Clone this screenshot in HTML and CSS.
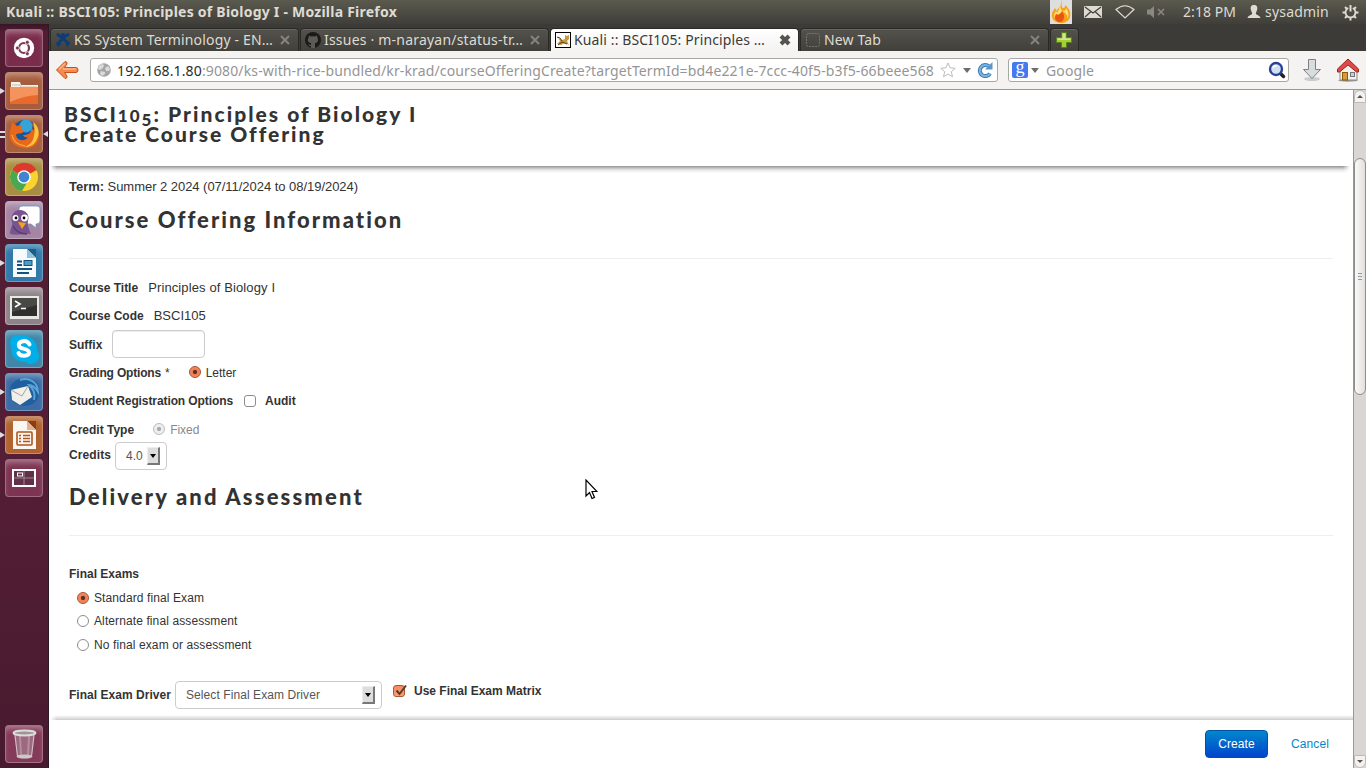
FILE: index.html
```
<!DOCTYPE html>
<html lang="en">
<head>
<meta charset="utf-8">
<title>Kuali :: BSCI105: Principles of Biology I</title>
<link rel="stylesheet" href="styles.css">
</head>
<body>
<header class="panel">
  <span class="panel-title">Kuali :: BSCI105: Principles of Biology I - Mozilla Firefox</span>
  <div class="tray">
    <svg class="tray-flame" width="22" height="24" viewBox="0 0 22 24"><rect width="22" height="24" fill="#dedede"/><path d="M11 0c2 4-1 5 2 8 2 0 2-2 2-3 5 4 6 8 5 12-1 4-5 6-9 6-6 0-10-4-9-9 0-3 2-4 3-6 1 1 1 2 1 3 3-3 6-6 5-11z" fill="#f9a11b"/><path d="M10 4c1 4 0 5 3 7 2 0 3-1 3-3 3 4 3 8 1 11 1-4-1-6-5-8-1 3-5 3-7 7-2-3 0-5 1-7l1 2c2-3 3-6 3-9z" fill="#fde07a"/><path d="M12 10c0 3 3 4 2 8-1 3-2 4-4 4-3 0-5-2-5-5 0-2 1-3 2-3l1 1c2-1 4-2 4-5z" fill="#e8560f"/></svg>
    <svg class="tray-mail" width="18" height="12" viewBox="0 0 18 12"><rect width="18" height="12" rx="1" fill="#dfdbd2"/><path d="M1 1l8 6 8-6M1 11l6-5.500M17 11l-6-5.500" fill="none" stroke="#45443f" stroke-width="1.300"/></svg>
    <svg class="tray-wifi" width="20" height="14" viewBox="0 0 20 14"><path d="M1 4.500Q10-3 19 4.500L10 13z" fill="none" stroke="#dfdbd2" stroke-width="1.200"/></svg>
    <svg class="tray-mute" width="18" height="12" viewBox="0 0 18 12"><path d="M0 3.500h3L7 0v12L3 8.500H0z" fill="#8a8880"/><path d="M11 3l6 6M17 3l-6 6" stroke="#8a8880" stroke-width="1.600"/></svg>
    <span class="clock">2:18 PM</span>
    <svg class="tray-user" width="14" height="14" viewBox="0 0 14 14"><path d="M7 0c3 0 3.500 2 3.300 4C10 6 9 7 8.800 8.500c0 1.500 4 1.500 4.700 4.500H.5C1.200 10 5.200 10 5.200 8.500 5 7 4 6 3.700 4 3.500 2 4 0 7 0z" fill="#dfdbd2"/></svg>
    <span class="user">sysadmin</span>
    <svg class="tray-gear" width="17" height="17" viewBox="0 0 17 17" fill="none" stroke="#dfdbd2"><path d="M6.200 4a5 5 0 1 0 4.600 0" stroke-width="1.800"/><path d="M8.500 1v6.500M.5 8.500h3M13.500 8.500h3M3 3l2 2M14 3l-2 2M3 14l2-2M14 14l-2-2M8.500 13.500v3" stroke-width="2"/></svg>
  </div>
</header>
<div class="desktop">
  <nav class="launcher">
    <div class="tile tile-dash"><svg width="36" height="36" viewBox="0 0 36 36"><circle cx="18" cy="18" r="10.200" fill="#fff"/><circle cx="18" cy="18" r="5" fill="none" stroke="#7d3552" stroke-width="2.200"/><g fill="#7d3552" stroke="#fff" stroke-width=".8"><circle cx="11.400" cy="18" r="2"/><circle cx="21.300" cy="12.300" r="2"/><circle cx="21.300" cy="23.700" r="2"/></g></svg></div>
    <div class="tile tile-files"><svg width="36" height="36" viewBox="0 0 36 36"><path d="M5 9h9l1 3h17v5H5z" fill="#f7f4f0"/><path d="M6 12h8l1 2h16" fill="none" stroke="#c9b8aa"/><rect x="4" y="14" width="28" height="17" rx="1" fill="#e8692c"/><path d="M4 14h28v8Q17 23 4 29z" fill="#f4935c"/></svg><i class="pip pip-left"></i></div>
    <div class="tile tile-firefox"><svg width="36" height="36" viewBox="0 0 36 36"><circle cx="19" cy="17" r="13" fill="#17569a"/><circle cx="20" cy="10" r="6.500" fill="#36a3d9"/><path d="M5 11l1-5 5 4c2-1 4-1 5 0-2 2-1 4 2 5-2 4-7 1-8 4 1 6 9 7 12 2-2 1-4 0-5-2 6 0 9-2 8-8 1 2 3 3 3 4 0-4-1-6-3-8 7 3 9 10 8 15-2 8-8 11-15 10C7 31 2 23 4 15z" fill="#e8671b"/><path d="M27 6c6 4 7 12 4 17-2 5-6 8-12 8 6-3 8-6 9-11 1-5 1-9-1-14z" fill="#fbc63e"/><path d="M6 19c1 6 6 10 13 11" fill="none" stroke="#f6a13a" stroke-width="1.500"/></svg><i class="pip pip-double"></i><i class="pip pip-right"></i></div>
    <div class="tile tile-chrome"><svg width="36" height="36" viewBox="0 0 36 36"><circle cx="18" cy="18" r="14" fill="#f9d42f"/><path d="M18 18L6 11a14 14 0 0 1 24.500 0z" fill="#dc3a2d"/><path d="M18 18L6 11a14 14 0 0 0 10 21l6-10z" fill="#4aa853"/><circle cx="18" cy="18" r="6.800" fill="#fff"/><circle cx="18" cy="18" r="5.400" fill="#3f84cf"/></svg></div>
    <div class="tile tile-pidgin"><svg width="36" height="36" viewBox="0 0 36 36"><path d="M16 4h15q3 0 3 3v12q0 3-4 3v4l-5-4h-9q-3 0-3-3V7q0-3 3-3z" fill="#fff" stroke="#6a9bc6" stroke-width=".8"/><path d="M4 32c0-6 3-8 2-12C4 13 8 8 14 8s10 5 8 11c-1 4 1 8 3 13-7-1-13 2-21 0z" fill="#79548f"/><circle cx="9.500" cy="16" r="3" fill="#fff"/><circle cx="18.500" cy="16" r="3.400" fill="#fff"/><circle cx="10" cy="16" r="1.400"/><circle cx="18" cy="16" r="1.400"/><path d="M12 20l8 1-4 6z" fill="#f4a51f"/><path d="M7 24q4 8 14 8" fill="none" stroke="#5b3b70" stroke-width="1.500"/></svg></div>
    <div class="tile tile-writer"><svg width="36" height="36" viewBox="0 0 36 36"><path d="M7 4h15l8 8v20H7z" fill="#f6fafc"/><path d="M21 4l9 9V4z" fill="#175f8d"/><path d="M21 4v9h9z" fill="#8dc3e0"/><path d="M11 16.500h5M11 20h5M11 24h15M11 28h12" stroke="#15527d" stroke-width="1.800"/><rect x="18" y="15.500" width="8" height="5" fill="#4a9cc8" stroke="#15527d"/></svg><i class="pip pip-left"></i></div>
    <div class="tile tile-terminal"><svg width="36" height="36" viewBox="0 0 36 36"><rect x="4" y="8" width="29" height="23" fill="#e9e8e5"/><rect x="6" y="10" width="25" height="18" fill="#2f302d"/><path d="M6 10h25v7L6 24z" fill="#484945"/><path d="M9 13l5 3-5 3M15 20.500h5" fill="none" stroke="#fff" stroke-width="1.600"/></svg></div>
    <div class="tile tile-skype"><svg width="36" height="36" viewBox="0 0 36 36"><g fill="#00aeea"><circle cx="18" cy="18" r="13"/><circle cx="12" cy="12" r="8"/><circle cx="25" cy="25" r="8"/></g><path d="M23.500 13.500c-1-3-4.500-4-7.500-3-4 1-4 5-1 6.500 3 1 8 1 8 4.500 0 4-9 4.500-10.500.5" fill="none" stroke="#fff" stroke-width="4" stroke-linecap="round"/></svg></div>
    <div class="tile tile-bird"><svg width="36" height="36" viewBox="0 0 36 36"><path d="M5 11C12 2 25 2 31 9c4 6 3 15-3 20-7 5-18 3-22-3-3-5-3-10-1-15z" fill="#1f5e9f"/><path d="M14 6c9-3 18 2 18 12-3-5-5-7-9-7 4 4 7 8 5 15" fill="none" stroke="#5aa3d8" stroke-width="2"/><path d="M5 16l17-4 4 11-12 8-8-5z" fill="#f1efe9"/><path d="M5 16l11 6 6-10" fill="none" stroke="#a5a49e"/></svg><i class="pip pip-left"></i></div>
    <div class="tile tile-impress"><svg width="36" height="36" viewBox="0 0 36 36"><path d="M7 4h15l8 8v20H7z" fill="#faf6f2"/><path d="M21 4l9 9V4z" fill="#8d3c0b"/><path d="M21 4v9h9z" fill="#e8b28c"/><rect x="11" y="15" width="15" height="13" rx="1" fill="none" stroke="#b3541a" stroke-width="1.600"/><path d="M13 18.500h2M13 21.500h2M13 24.500h2M17 18.500h7M17 21.500h7M17 24.500h7" stroke="#b3541a" stroke-width="1.500"/></svg><i class="pip pip-left"></i></div>
    <div class="tile tile-spaces"><svg width="36" height="36" viewBox="0 0 36 36"><rect x="7" y="10" width="22" height="16" fill="#63304a" stroke="#fff" stroke-width="2"/><path d="M18 11v14M8 18h20" stroke="#9d8490"/><rect x="11.500" y="13" width="5" height="3" fill="none" stroke="#fff"/></svg></div>
    <div class="tile tile-trash"><svg width="36" height="36" viewBox="0 0 36 36"><path d="M8 7l3 24q8 3 15 0l3-24z" fill="#a87e90" fill-opacity=".7"/><path d="M14 10l1 19M23 10l-1 19" stroke="#d9c4cc" stroke-opacity=".4" stroke-width="2"/><path d="M9 9l2.500 21M28 9l-2.500 21" stroke="#d6c4cb"/><ellipse cx="18.500" cy="7" rx="11" ry="2.400" fill="#9d9897" stroke="#dcdcda" stroke-width="2"/><ellipse cx="18.500" cy="30.500" rx="8" ry="2" fill="#c9cac6"/></svg></div>
  </nav>
  <main class="browser">
    <div class="tabs">
      <div class="tab"><svg class="fav" width="16" height="16" viewBox="0 0 16 16"><path d="M2 2c3 2 9 7 12 10M14 2C10 4 4 9 3 13" stroke="#0b3d79" stroke-width="3" fill="none"/><circle cx="8" cy="3" r="2" fill="#0b3d79"/><path d="M1 10l5 2-3 3zM15 10l-5 2 3 3z" fill="#0b3d79"/></svg><span class="t1">KS System Terminology - EN…</span><svg class="x" width="10" height="10" viewBox="0 0 10 10"><path d="M1 1l8 8M9 1L1 9" stroke="#85847f" stroke-width="2"/></svg></div>
      <div class="tab"><svg class="fav" width="16" height="16" viewBox="0 0 16 16"><circle cx="8" cy="8" r="8" fill="#1b1a19"/><path d="M4 3.500l2 1q2-.6 4 0l2-1 .5 2.500C14 9 12 11 10 11v5H6v-2c-2 .4-2-1-3-1.500 2-.3 2 1 3 .5v-2C3 11 2 8 3.500 6z" fill="#5c5b55"/></svg><span class="t2">Issues · m-narayan/status-tr…</span><svg class="x" width="10" height="10" viewBox="0 0 10 10"><path d="M1 1l8 8M9 1L1 9" stroke="#85847f" stroke-width="2"/></svg></div>
      <div class="tab tab-active"><svg class="fav" width="16" height="16" viewBox="0 0 16 16"><rect x=".5" y=".5" width="15" height="15" fill="#fff" stroke="#000"/><path d="M2 12l3-3-2-3 4 2 3-1V3l2 1 2-1v4l-2 2 2 4-4-2-4 2z" fill="#c99740"/><path d="M2 5l3 1 2 3M3 13l4-3 5 2" stroke="#4d3b22" fill="none"/></svg><span class="t3">Kuali :: BSCI105: Principles …</span><svg class="x" width="12" height="12" viewBox="0 0 12 12"><path d="M2 2l8 8M10 2l-8 8" stroke="#55534e" stroke-width="4"/></svg></div>
      <div class="tab"><svg class="fav" width="16" height="16" viewBox="0 0 16 16"><rect x="1.500" y="1.500" width="13" height="13" rx="2" fill="none" stroke="#77756f" stroke-dasharray="2 1"/></svg><span class="t4">New Tab</span><svg class="x" width="10" height="10" viewBox="0 0 10 10"><path d="M1 1l8 8M9 1L1 9" stroke="#85847f" stroke-width="2"/></svg></div>
      <div class="tab tab-new"><svg width="16" height="16" viewBox="0 0 16 16"><path d="M5.500.5h5v5h5v5h-5v5h-5v-5h-5v-5h5z" fill="#a6ce39" stroke="#587f1c"/><path d="M6.500 1.500h3v5h5v1.500h-13V6.500h5z" fill="#d1e58c"/></svg></div>
    </div>
    <div class="toolbar">
      <svg class="back" width="24" height="20" viewBox="0 0 24 20"><path d="M1.500 10L10 1.500q2.500 0 2 2.500L9.500 7.500H21q2 0 2 2.500t-2 2.500H9.500L12 16q.5 2.500-2 2.500z" fill="#f5894d" stroke="#c5501a" stroke-linejoin="round"/><path d="M4 9.500l6-6M8 9h13" stroke="#fbb68c" stroke-width="1.500"/></svg>
      <div class="urlbar">
        <svg class="globe" width="14" height="14" viewBox="0 0 14 14"><circle cx="7" cy="7" r="6.800" fill="#a5a5a5"/><path d="M2 3l3-2 2 1-1 3-3 2-2-1zM8 5l3-2 2 3-1 2-3 0zM4 8l4 1v2l-3 2-2-2z" fill="#dadada"/></svg>
        <span class="url"><b>192.168.1.80</b>:9080/ks-with-rice-bundled/kr-krad/courseOfferingCreate?targetTermId=bd4e221e-7ccc-40f5-b3f5-66beee568</span>
        <svg class="star" width="16" height="16" viewBox="0 0 16 16"><path d="M8 1l2.100 4.800 5.100.5-3.900 3.400 1.200 5.100L8 12.100l-4.500 2.700 1.200-5.100L.8 6.300l5.100-.5z" fill="#fff" stroke="#bdbcb9"/></svg>
        <i class="drop"></i>
        <svg class="reload" width="16" height="16" viewBox="0 0 16 16"><path d="M12 4.500A5.500 5.500 0 1 0 13 11.500" fill="none" stroke="#3e7db6" stroke-width="4"/><path d="M12 4.500A5.500 5.500 0 1 0 13 11.500" fill="none" stroke="#7db2dc" stroke-width="2"/><path d="M15.500 0v7.500H8z" fill="#5a97cb"/></svg>
      </div>
      <div class="search">
        <span class="g">g</span><i class="drop"></i><span class="google">Google</span>
        <svg width="18" height="18" viewBox="0 0 18 18"><path d="M12 12l3.500 3.500" stroke="#222" stroke-width="3.500" stroke-linecap="round"/><circle cx="8" cy="8" r="6" fill="#cfe0f3" stroke="#2b3f94" stroke-width="2.400"/><path d="M5 7q1-3 4-2" fill="none" stroke="#fff" stroke-width="1.500"/></svg>
      </div>
      <svg class="download" width="20" height="24" viewBox="0 0 20 24"><ellipse cx="10" cy="21" rx="8" ry="2" fill="#ccc"/><path d="M6.500 1.500h7v10h5L10 20.500 1.500 11.500h5z" fill="#d7dcdf" stroke="#7c8083"/></svg>
      <svg class="home" width="24" height="24" viewBox="0 0 24 24"><ellipse cx="12" cy="22.500" rx="10" ry="1.200" fill="#999"/><path d="M4 11v11h17V11l-9-8z" fill="#f3f1ed" stroke="#8e8b85"/><path d="M12 1L1.500 11v3h2L12 7l8.500 7h2v-3z" fill="#dd4a4a" stroke="#a42020"/><rect x="6.500" y="14.500" width="5" height="7.500" fill="#d69a3f" stroke="#8f5902"/><rect x="14.500" y="14.500" width="4" height="4" fill="#b9d3ea" stroke="#777"/></svg>
    </div>
    <div class="viewport">
      <div class="page">
        <div class="page-head"><h1><span class="h1a">BSCI<small>10</small><small class="low">5</small>: Principles of Biology I</span><br><span class="h1b">Create Course Offering</span></h1></div>
        <div class="page-body">
          <div class="term"><b>Term:</b> Summer 2 2024 (07/11/2024 to 08/19/2024)</div>
          <h2>Course Offering Information</h2>
          <div class="row row-first"><label>Course Title</label><span class="val val-title">Principles of Biology I</span></div>
          <div class="row"><label>Course Code</label><span class="val val-code">BSCI105</span></div>
          <div class="row row-suffix"><label>Suffix</label><span class="input"></span></div>
          <div class="row row-grading"><label>Grading Options</label><span class="star-req">*</span><i class="radio on"></i><span class="opt">Letter</span></div>
          <div class="row row-reg"><label>Student Registration Options</label><i class="check"></i><label class="audit">Audit</label></div>
          <div class="row row-type"><label>Credit Type</label><i class="radio dim"></i><span class="opt opt-dim">Fixed</span></div>
          <div class="row row-credits"><label>Credits</label><span class="select select-sm">4.0<i class="arrow"></i></span></div>
          <h2 class="second">Delivery and Assessment</h2>
          <div class="row row-exams"><label>Final Exams</label></div>
          <div class="choice"><i class="radio on"></i><span class="opt">Standard final Exam</span></div>
          <div class="choice"><i class="radio"></i><span class="opt">Alternate final assessment</span></div>
          <div class="choice"><i class="radio"></i><span class="opt">No final exam or assessment</span></div>
          <div class="row row-driver"><label>Final Exam Driver</label><span class="select select-lg">Select Final Exam Driver<i class="arrow"></i></span><span class="matrix"><i class="check checked"><svg width="15" height="14" viewBox="0 0 15 14"><path d="M3.500 6.500l3 3.500L13 1.500" fill="none" stroke="#5a3a2c" stroke-width="2"/></svg></i><label>Use Final Exam Matrix</label></span></div>
        </div>
        <div class="page-foot"><span class="create">Create</span><span class="cancel">Cancel</span></div>
        <svg class="cursor" width="13" height="21" viewBox="0 0 13 21"><path d="M1 1v16l3.500-3.500L7 19.500l2.500-1L7 12.500h5z" fill="#fff" stroke="#000" stroke-width="1.200"/></svg>
      </div>
      <div class="scroll"><div class="sb sb-up"><i></i></div><div class="track"><div class="thumb"><i></i><i></i><i></i></div></div><div class="sb sb-down"><i></i></div></div>
    </div>
  </main>
</div>
</body>
</html>
```
FILE: styles.css
```
* { box-sizing: border-box; }
html, body { margin: 0; height: 768px; overflow: hidden; }
body {
  display: flex;
  flex-direction: column;
  width: 1366px;
  font: 12px/20px "Liberation Sans", Arial, sans-serif;
  color: #333;
  background: #fff;
}
svg { display: block; flex: none; }
i { display: block; flex: none; font-style: normal; }

/* Top desktop panel */
.panel {
  display: flex;
  flex: none;
  justify-content: space-between;
  height: 24px;
  padding: 0 7px 0 6px;
  background: linear-gradient(#5b5a4f, #46453f 75%, #3f3e39);
  font: 14px/24px "Noto Sans", sans-serif;
  color: #dfdbd2;
  white-space: nowrap;
}
.panel-title { font-weight: 700; letter-spacing: .234px; }
.tray { display: flex; align-items: center; }
.tray-mail { margin-left: 12px; }
.tray-wifi { margin-left: 13px; }
.tray-mute { margin-left: 12px; }
.clock { width: 53px; margin-left: 18px; letter-spacing: .058px; }
.tray-user { margin-left: 11px; }
.user { width: 64px; margin-left: 4px; letter-spacing: .2px; }
.tray-gear { margin-left: 13px; }

/* Application launcher */
.desktop { display: flex; flex: 1; min-height: 0; }
.launcher {
  display: flex;
  flex: none;
  flex-direction: column;
  gap: 5px;
  width: 49px;
  padding: 5px 0 5px 5px;
  background: linear-gradient(#3a1526, #521c33 8px, #541e36 60%, #481a2f);
  border-right: 1px solid #2e1a26;
}
.tile {
  position: relative;
  flex: none;
  width: 38px;
  height: 38px;
  border: 1px solid rgba(255,255,255,.28);
  border-radius: 4px;
  box-shadow: inset 0 5px 6px -3px rgba(255,255,255,.4);
}
.tile-dash { background-color: #7a2d4b; }
.tile-files { background-color: #a55d3c; }
.tile-firefox { background-color: #a8603d; }
.tile-chrome { background-color: #a98d42; }
.tile-pidgin { background-color: #a585a4; }
.tile-writer { background-color: #3079a8; }
.tile-terminal { background-color: #8e838a; }
.tile-skype { background-color: #3f86a8; }
.tile-bird { background-color: #3c6ca5; }
.tile-impress { background-color: #b0622f; }
.tile-spaces { background-color: #7d3452; }
.tile-trash { margin-top: auto; background-color: #843a58; }
.pip { position: absolute; top: 15px; }
.pip-left { left: -6px; border-left: 5px solid #ddd; border-top: 3.5px solid transparent; border-bottom: 3.5px solid transparent; }
.pip-right { left: 37px; border-right: 5px solid #ddd; border-top: 3.5px solid transparent; border-bottom: 3.5px solid transparent; }
.pip-double { left: -6px; width: 5px; height: 7px; border-top: 2px solid #ddd; border-bottom: 2px solid #ddd; }

/* Browser chrome */
.browser { display: flex; flex: 1; flex-direction: column; min-width: 0; }
.tabs {
  display: flex;
  flex: none;
  height: 27px;
  padding: 4px 0 0 1px;
  background: #3c3b37;
}
.tab {
  display: flex;
  flex: none;
  align-items: center;
  width: 249px;
  height: 23px;
  margin-right: 1px;
  padding: 0 8px 0 4px;
  border: 1px solid #2a2926;
  border-bottom: 0;
  border-radius: 4px 4px 0 0;
  box-shadow: inset 0 1px #686761;
  background: linear-gradient(#53524c, #41403b);
  font: 14px/22px "Noto Sans", sans-serif;
  color: #dfdbd2;
  white-space: nowrap;
}
.tab span { margin-left: 3px; }
.t1 { letter-spacing: .161px; }
.t2 { letter-spacing: .208px; }
.t3 { letter-spacing: .121px; }
.t4 { letter-spacing: .138px; }
.x { margin-left: auto; }
.tab-active { padding-right: 7px; background: linear-gradient(#fff, #f4f3f2); color: #3c3b37; box-shadow: none; }
.tab-new { width: 29px; padding: 0 5px; }
.toolbar {
  display: flex;
  flex: none;
  align-items: center;
  height: 39px;
  padding: 0 6px;
  background: #f4f3f2;
  border-bottom: 1px solid #9a9896;
  font: 14px/22px "Noto Sans", sans-serif;
}
.urlbar, .search {
  display: flex;
  flex: none;
  align-items: center;
  height: 24px;
  border: 1px solid #aaa8a4;
  border-radius: 3px;
  background: #fff;
}
.urlbar { width: 908px; margin-left: 11px; padding: 0 4px 0 6px; }
.url { width: 817px; margin-left: 6px; padding-top: 1px; color: #959595; letter-spacing: .131px; white-space: nowrap; }
.url b { font-weight: 400; color: #2b2b2b; }
.star { margin-left: 6px; }
.drop { border-top: 5px solid #6d6d6d; border-left: 4px solid transparent; border-right: 4px solid transparent; }
.urlbar .drop { margin-left: 7px; }
.reload { margin-left: auto; }
.search { width: 281px; margin-left: 10px; padding: 0 2px 0 3px; }
.search svg { margin-left: auto; }
.g { width: 16px; height: 16px; border-radius: 2px; background: #4479f0; color: #fff; font: 18px/11px "Liberation Serif", serif; text-align: center; }
.search .drop { margin-left: 3px; }
.google { margin-left: 7px; padding-top: 1px; color: #959595; letter-spacing: .125px; }
.download { margin-left: 13px; }
.home { margin-left: 14px; }

/* Page */
.viewport { display: flex; flex: 1; min-height: 0; }
.page { position: relative; display: flex; flex: 1; flex-direction: column; overflow: hidden; background: #fff; }
.page-head { position: relative; flex: none; height: 76px; padding: 14px 0 0 15px; }
.page-head::after {
  content: "";
  position: absolute;
  left: 1px;
  right: 3px;
  top: 76px;
  height: 7px;
  background: linear-gradient(rgba(0,0,0,.42), rgba(0,0,0,.1) 55%, transparent);
  -webkit-mask-image: linear-gradient(90deg, transparent, #000 7px, #000 calc(100% - 7px), transparent);
}
h1, h2 { margin: 0; font-family: Lato, sans-serif; font-weight: 900; color: #333; white-space: nowrap; }
h1 { font-size: 21px; line-height: 20px; }
h1 small { font-size: 17px; line-height: 1px; }
h1 .low { position: relative; top: 4px; }
.h1a { letter-spacing: 2.03px; }
.h1b { letter-spacing: 1.98px; }
h2 { height: 62px; border-bottom: 1px solid #eee; font-size: 22px; line-height: 46px; letter-spacing: 2.03px; }
h2.second { margin-top: 4px; letter-spacing: 2.15px; }
.page-body { flex: 1; min-height: 0; padding: 11px 20px 0; }
.term { height: 20px; font-size: 13px; letter-spacing: -.038px; white-space: nowrap; }
.row { display: flex; align-items: center; height: 28px; white-space: nowrap; }
.row-first { margin-top: 15px; }
label { font-weight: 700; }
.val { margin-left: 10px; font-size: 13px; }
.val-title { letter-spacing: .118px; }
.row-suffix label { padding-top: 2px; }
.input { width: 93px; height: 28px; margin-left: 10px; border: 1px solid #ccc; border-radius: 4px; box-shadow: inset 0 1px 1px rgba(0,0,0,.075); }
.star-req { margin-left: 4px; }
.radio { width: 12px; height: 12px; border: 1px solid #8d8d8d; border-radius: 50%; background: #fff; }
.radio.on { border-color: #a5512f; background: radial-gradient(circle, #5a3526 0 1.8px, #f0794c 2.4px, #f79a72); }
.radio.dim { border-color: #bbb; background: radial-gradient(circle, #aaa 0 1.8px, #eee 2.4px); }
.row-grading label { letter-spacing: -.178px; }
.row-grading label, .row-grading span { padding-top: 2px; }
.row-grading .radio { margin-left: 19px; }
.opt { margin-left: 5px; }
.opt-dim { color: #888; }
.row-reg { margin-top: 1px; }
.row-reg label { letter-spacing: -.095px; }
.row-reg .audit { letter-spacing: 0; }
.check { width: 12px; height: 12px; border: 1px solid #8d8d8d; border-radius: 3px; background: #fff; }
.row-reg .check { margin: 0 9px 0 11px; }
.row-type { height: 27px; padding-top: 1px; }
.row-type label, .row-type span { padding-top: 2px; }
.row-type .radio { margin-left: 19px; }
.row-credits label { margin-top: -2px; letter-spacing: .094px; }
.select { display: flex; align-items: center; justify-content: space-between; height: 28px; border: 1px solid #ccc; border-radius: 4px; color: #555; }
.select-sm { width: 52px; margin-left: 4px; padding: 0 6px 0 10px; }
.select-lg { width: 207px; margin-left: 4px; padding: 0 6px 0 10px; letter-spacing: .081px; }
.arrow { width: 13px; height: 18px; border: 1px solid; border-color: #eee #777 #777 #eee; border-right-width: 2px; border-bottom-width: 2px; background: #ddd; }
.arrow::before { content: ""; display: block; width: 0; margin: 6px 0 0 2px; border-top: 4px solid #000; border-left: 3px solid transparent; border-right: 3px solid transparent; }
.row-exams { margin-top: 24px; height: 26px; padding-top: 2px; }
.choice { display: flex; align-items: center; height: 23.5px; padding-left: 8px; letter-spacing: .105px; white-space: nowrap; }
.row-driver { margin-top: 24px; }
.row-driver > label { letter-spacing: .036px; }
.matrix { display: flex; align-items: center; margin: -8px 0 0 11px; }
.matrix label { margin-left: 9px; }
.checked { border-color: #b5532c; background: linear-gradient(#f7895f, #f3a07e); }
.checked svg { margin: -2px 0 0 -1px; }
.page-foot { position: relative; display: flex; flex: none; justify-content: flex-end; height: 48px; padding: 10px 23px 0 0; background: #fff; }
.page-foot::before {
  content: "";
  position: absolute;
  left: 1px;
  right: 0;
  top: -5px;
  height: 5px;
  background: linear-gradient(transparent, rgba(0,0,0,.2));
  -webkit-mask-image: linear-gradient(90deg, transparent, #000 7px);
}
.create { width: 63px; height: 28px; border: 1px solid #0052a8; border-radius: 4px; background: linear-gradient(#0088cc, #0044cc); color: #fff; letter-spacing: .12px; line-height: 26px; text-align: center; }
.cancel { width: 39px; margin-left: 23px; color: #0088cc; letter-spacing: .107px; line-height: 28px; }
.cursor { position: absolute; left: 536px; top: 389px; }

/* Scrollbar */
.scroll { display: flex; flex: none; flex-direction: column; width: 13px; border-left: 1px solid #999; background: #d9d6d4; }
.sb { display: flex; align-items: center; justify-content: center; height: 13px; background: #f4f3f2; border: 1px solid #bbb; }
.sb-up { border-radius: 6px 6px 0 0; }
.sb-up i { border-bottom: 3px solid #555; border-left: 3px solid transparent; border-right: 3px solid transparent; }
.sb-down { border-radius: 0 0 6px 6px; }
.sb-down i { border-top: 3px solid #555; border-left: 3px solid transparent; border-right: 3px solid transparent; }
.track { flex: 1; padding-top: 55px; }
.thumb { display: flex; flex-direction: column; align-items: center; justify-content: center; gap: 2px; height: 237px; border: 1px solid #8f8d8a; border-radius: 6px; background: linear-gradient(90deg, #fafafa, #e2e0de); }
.thumb i { width: 4px; height: 1px; background: #999; }
```
